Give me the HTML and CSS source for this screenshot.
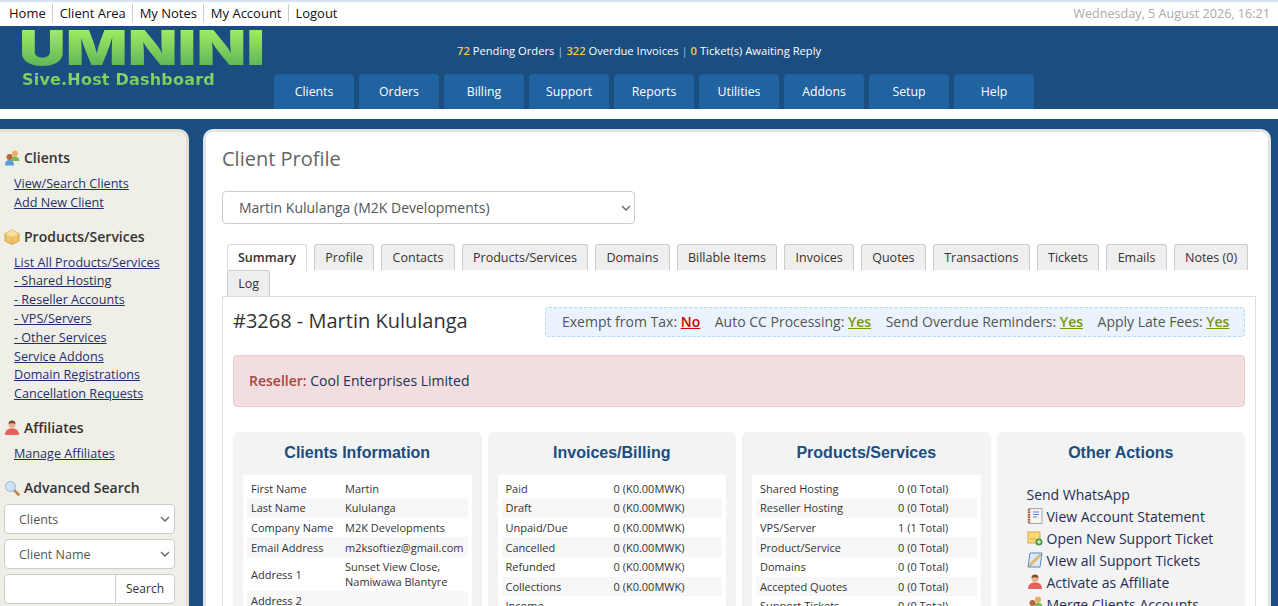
FILE: index.html
```html
<!DOCTYPE html>
<html lang="en">
  <head>
    <meta charset="UTF-8" />
    <title>Client Profile</title>
    <link rel="stylesheet" href="styles.css">
  </head>
  <body>
    <svg class="sprites" width="0" height="0">
      <symbol id="i-clients" viewBox="0 0 16 16">
        <circle cx="11" cy="3.500" r="3" fill="#e8b060"/>
        <path d="M7 11c0-3 2-4.500 4-4.500s4.500 1.500 4.500 4.500z" fill="#7fb85a"/>
        <circle cx="5.500" cy="7" r="3" fill="#b5683c"/>
        <path d="M1 15.500c0-4 2-5.500 4.500-5.500s4.500 1.500 4.500 5.500z" fill="#5a9ad8"/>
      </symbol>
      <symbol id="i-box" viewBox="0 0 16 16">
        <path d="M8 1l7 3.500v7.500l-7 3.500-7-3.500v-7.500z" fill="#f0c468" stroke="#c89a48" stroke-width=".8"/>
        <path d="M1 4.500l7 3.500 7-3.500-7-3.500z" fill="#f8e0a0"/>
        <path d="M8 8v7.500" stroke="#d8aa58"/>
      </symbol>
      <symbol id="i-person" viewBox="0 0 16 16">
        <circle cx="8" cy="4.500" r="3.500" fill="#e8b090"/>
        <path d="M4.500 4c0-2.500 1.500-3.500 3.500-3.500s3.500 1 3.500 3.500c-1.500-1-5.500-1-7 0z" fill="#7a4a28"/>
        <path d="M1 15c0-5 3-6.500 7-6.500s7 1.500 7 6.500z" fill="#e8605a"/>
      </symbol>
      <symbol id="i-search" viewBox="0 0 16 16">
        <path d="M10 10l4.500 4.500" stroke="#b88850" stroke-width="2.500" stroke-linecap="round"/>
        <circle cx="6.500" cy="6.500" r="5" fill="#cfe2f5" stroke="#9ab8d8"/>
      </symbol>
      <symbol id="i-statement" viewBox="0 0 16 16">
        <rect x="2" y=".5" width="13" height="15" fill="#f4f4f4" stroke="#a8a8a8"/>
        <path d="M2 1v14" stroke="#b0583c" stroke-width="2.500" stroke-dasharray="1.500 1"/>
        <path d="M6 4h6M6 6.500h6M6 9h4" stroke="#5a8ad0"/>
      </symbol>
      <symbol id="i-ticket" viewBox="0 0 16 16">
        <rect x="1" y="2" width="12" height="11" fill="#f8d878" stroke="#d8a848"/>
        <path d="M3 9h6" stroke="#d8a848"/>
        <circle cx="12" cy="12" r="3.500" fill="#4a9a4a"/>
        <path d="M10 12h4M12 10v4" stroke="#fff"/>
      </symbol>
      <symbol id="i-edit" viewBox="0 0 16 16">
        <path d="M3 1h12l-2 14h-12z" fill="#dce9f8" stroke="#5a8ac8"/>
        <path d="M14.500 3l-9 9-3 3 .8-3.800 9-8.500z" fill="#f0c860" stroke="#a88838" stroke-width=".6"/>
      </symbol>
    </svg>

    <div class="topbar">
      <nav class="top-links">
        <a href="#">Home</a>
        <a href="#">Client Area</a>
        <a href="#">My Notes</a>
        <a href="#">My Account</a>
        <a href="#">Logout</a>
      </nav>
      <div class="top-date">Wednesday, 5 August 2026, 16:21</div>
    </div>

    <header class="header">
      <div class="logo">
        <div class="logo-name">UMNINI</div>
        <div class="logo-sub">Sive.Host Dashboard</div>
      </div>
      <div class="header-main">
        <div class="stats">
          <b>72</b> Pending Orders <i>|</i> <b>322</b> Overdue Invoices <i>|</i> <b>0</b> Ticket(s) Awaiting Reply
        </div>
        <nav class="main-nav">
          <a href="#">Clients</a>
          <a href="#">Orders</a>
          <a href="#">Billing</a>
          <a href="#">Support</a>
          <a href="#">Reports</a>
          <a href="#">Utilities</a>
          <a href="#">Addons</a>
          <a href="#">Setup</a>
          <a href="#">Help</a>
        </nav>
      </div>
    </header>

    <div class="page">
      <aside class="sidebar">
        <h3><svg class="icon"><use href="#i-clients"/></svg>Clients</h3>
        <ul>
          <li><a href="#">View/Search Clients</a></li>
          <li><a href="#">Add New Client</a></li>
        </ul>
        <h3><svg class="icon"><use href="#i-box"/></svg>Products/Services</h3>
        <ul>
          <li><a href="#">List All Products/Services</a></li>
          <li><a href="#">- Shared Hosting</a></li>
          <li><a href="#">- Reseller Accounts</a></li>
          <li><a href="#">- VPS/Servers</a></li>
          <li><a href="#">- Other Services</a></li>
          <li><a href="#">Service Addons</a></li>
          <li><a href="#">Domain Registrations</a></li>
          <li><a href="#">Cancellation Requests</a></li>
        </ul>
        <h3><svg class="icon"><use href="#i-person"/></svg>Affiliates</h3>
        <ul>
          <li><a href="#">Manage Affiliates</a></li>
        </ul>
        <h3 class="search-title"><svg class="icon"><use href="#i-search"/></svg>Advanced Search</h3>
        <select class="side-select"><option>Clients</option></select>
        <select class="side-select"><option>Client Name</option></select>
        <div class="search-row">
          <input type="text" />
          <button>Search</button>
        </div>
      </aside>

      <main class="content">
        <h1>Client Profile</h1>
        <select class="client-select"><option>Martin Kululanga (M2K Developments)</option></select>

        <ul class="tabs">
          <li class="active">Summary</li>
          <li>Profile</li>
          <li>Contacts</li>
          <li>Products/Services</li>
          <li>Domains</li>
          <li>Billable Items</li>
          <li>Invoices</li>
          <li>Quotes</li>
          <li>Transactions</li>
          <li>Tickets</li>
          <li>Emails</li>
          <li>Notes (0)</li>
          <li>Log</li>
        </ul>

        <section class="tab-box">
          <div class="client-head">
            <h2>#3268 - Martin Kululanga</h2>
            <div class="flags">
              <span>Exempt from Tax: <a class="no" href="#">No</a></span>
              <span>Auto CC Processing: <a class="yes" href="#">Yes</a></span>
              <span>Send Overdue Reminders: <a class="yes" href="#">Yes</a></span>
              <span>Apply Late Fees: <a class="yes" href="#">Yes</a></span>
            </div>
          </div>

          <div class="alert"><strong>Reseller:</strong> Cool Enterprises Limited</div>

          <div class="columns">
            <div class="col">
              <h4>Clients Information</h4>
              <table class="info info-client">
                <tr><td>First Name</td><td>Martin</td></tr>
                <tr><td>Last Name</td><td>Kululanga</td></tr>
                <tr><td>Company Name</td><td>M2K Developments</td></tr>
                <tr><td>Email Address</td><td>m2ksoftiez@gmail.com</td></tr>
                <tr><td>Address 1</td><td>Sunset View Close,<br>Namiwawa Blantyre</td></tr>
                <tr><td>Address 2</td><td></td></tr>
              </table>
            </div>
            <div class="col">
              <h4>Invoices/Billing</h4>
              <table class="info info-billing">
                <tr><td>Paid</td><td>0 (K0.00MWK)</td></tr>
                <tr><td>Draft</td><td>0 (K0.00MWK)</td></tr>
                <tr><td>Unpaid/Due</td><td>0 (K0.00MWK)</td></tr>
                <tr><td>Cancelled</td><td>0 (K0.00MWK)</td></tr>
                <tr><td>Refunded</td><td>0 (K0.00MWK)</td></tr>
                <tr><td>Collections</td><td>0 (K0.00MWK)</td></tr>
                <tr><td>Income</td><td></td></tr>
              </table>
            </div>
            <div class="col">
              <h4>Products/Services</h4>
              <table class="info info-products">
                <tr><td>Shared Hosting</td><td>0 (0 Total)</td></tr>
                <tr><td>Reseller Hosting</td><td>0 (0 Total)</td></tr>
                <tr><td>VPS/Server</td><td>1 (1 Total)</td></tr>
                <tr><td>Product/Service</td><td>0 (0 Total)</td></tr>
                <tr><td>Domains</td><td>0 (0 Total)</td></tr>
                <tr><td>Accepted Quotes</td><td>0 (0 Total)</td></tr>
                <tr><td>Support Tickets</td><td>0 (0 Total)</td></tr>
              </table>
            </div>
            <div class="col">
              <h4>Other Actions</h4>
              <ul class="actions">
                <li>Send WhatsApp</li>
                <li><svg class="icon-sm"><use href="#i-statement"/></svg>View Account Statement</li>
                <li><svg class="icon-sm"><use href="#i-ticket"/></svg>Open New Support Ticket</li>
                <li><svg class="icon-sm"><use href="#i-edit"/></svg>View all Support Tickets</li>
                <li><svg class="icon-sm"><use href="#i-person"/></svg>Activate as Affiliate</li>
                <li><svg class="icon-sm"><use href="#i-clients"/></svg>Merge Clients Accounts</li>
              </ul>
            </div>
          </div>
        </section>
      </main>
    </div>
  </body>
</html>
```

FILE: styles.css
```css
:root {
  --blue: #1a4d80;
  --tab-blue: #2162a1;
  --text: #333;
  --link: #1f2f6b;
  --chevron: url("data:image/svg+xml,%3Csvg xmlns='http://www.w3.org/2000/svg' width='10' height='6'%3E%3Cpath d='M1 1l4 4 4-4' fill='none' stroke='%23666' stroke-width='1.400'/%3E%3C/svg%3E");
}

* {
  padding: 0;
  margin: 0;
  box-sizing: border-box;
}

html,
body {
  height: 606px;
  overflow: hidden;
}

body {
  font-family: "Open Sans", sans-serif;
  font-size: 13px;
  color: var(--text);
  background-color: #fff;
}

.sprites {
  position: absolute;
}

/* top bar */
.topbar {
  height: 26px;
  border-top: 2px solid #d9e4ee;
  display: flex;
  justify-content: space-between;
  align-items: center;
  padding: 0 8px 2px 9px;
}

.top-links a {
  color: #111;
  text-decoration: none;
  padding-right: 6px;
  margin-right: 3.500px;
  border-right: 1px solid #ccc;
}

.top-links a:last-child {
  border-right: 0;
}

.top-date {
  color: #aaa;
  font-size: 12.600px;
}

/* header */
.header {
  height: 83px;
  background-color: var(--blue);
  display: flex;
}

.logo {
  width: 274px;
  padding-left: 19px;
  flex-shrink: 0;
}

.logo-name {
  width: max-content;
  height: 43px;
  line-height: 43px;
  font-family: Inter, sans-serif;
  font-weight: 900;
  font-size: 48px;
  transform-origin: left;
  transform: scaleX(1.350);
  background: linear-gradient(#a0ea62 10%, #62b858 90%);
  -webkit-background-clip: text;
  background-clip: text;
  color: transparent;
}

.logo-sub {
  width: max-content;
  margin: 1px 0 0 3px;
  font-family: "DejaVu Sans", sans-serif;
  font-weight: 700;
  font-size: 16px;
  line-height: 20px;
  letter-spacing: 0.2px;
  background: linear-gradient(#94e060, #68c060);
  -webkit-background-clip: text;
  background-clip: text;
  color: transparent;
}

.header-main {
  flex: 1;
  display: flex;
  flex-direction: column;
  justify-content: space-between;
}

.stats {
  padding: 17px 0 0 183px;
  color: #fff;
  font-size: 11.200px;
}

.stats b {
  color: #f6c945;
  font-weight: 600;
}

.stats i {
  font-style: normal;
  color: #8fc4ee;
}

.main-nav {
  display: flex;
  gap: 5px;
}

.main-nav a {
  width: 80px;
  height: 35px;
  line-height: 35px;
  text-align: center;
  font-size: 12.300px;
  color: #fff;
  text-decoration: none;
  background-color: var(--tab-blue);
  border-radius: 4px 4px 0 0;
}

/* page */
.page {
  margin-top: 10px;
  padding: 10px 7px 0 0;
  height: 487px;
  background-color: var(--blue);
  display: flex;
  gap: 14px;
}

.sidebar {
  width: 189px;
  flex-shrink: 0;
  height: 600px;
  padding: 17px 14px 0 4px;
  background-color: #f0efe7;
  border-top: 3px solid #e2dfcf;
  border-right: 3px solid #e2dfcf;
  border-radius: 0 10px 0 0;
}

.sidebar h3 {
  display: flex;
  align-items: center;
  font-size: 14px;
  font-weight: 600;
  line-height: 18px;
  margin-bottom: 8px;
  color: #333;
}

.sidebar .search-title {
  margin-bottom: 7px;
}

.icon {
  width: 16px;
  height: 16px;
  margin: 0 4px 0 0;
}

.sidebar ul {
  list-style: none;
  padding-left: 10px;
  margin-bottom: 15px;
}

.sidebar li {
  line-height: 18.800px;
  font-size: 12.600px;
}

.sidebar li a {
  color: var(--link);
}

.side-select {
  display: block;
  width: 171px;
  height: 30px;
  margin-bottom: 5px;
  padding: 2px 0 0 14px;
  border: 1px solid #ccc;
  border-radius: 4px;
  appearance: none;
  background: #fff var(--chevron) no-repeat right 4px center;
  font-family: inherit;
  font-size: 12.500px;
  color: #555;
}

.search-row {
  display: flex;
  width: 171px;
  height: 30px;
  border: 1px solid #ccc;
  border-radius: 4px;
  background-color: #fff;
}

.search-row input {
  width: 111px;
  border: 0;
  border-right: 1px solid #ccc;
  background: transparent;
}

.search-row button {
  flex: 1;
  border: 0;
  background: transparent;
  font-family: inherit;
  font-size: 12px;
  color: #333;
}

/* content */
.content {
  flex: 1;
  height: 600px;
  padding: 13px 12px 0 16px;
  background-color: #fff;
  border: 3px solid #e1e5e9;
  border-bottom: 0;
  border-radius: 10px 10px 0 0;
}

.content h1 {
  font-size: 20px;
  font-weight: 400;
  line-height: 27px;
  color: #666;
  margin-bottom: 19px;
}

.client-select {
  display: block;
  width: 413px;
  height: 33px;
  padding-left: 16px;
  border: 1px solid #ccc;
  border-radius: 4px;
  appearance: none;
  background: #fff var(--chevron) no-repeat right 3px center;
  font-family: inherit;
  font-size: 14px;
  color: #555;
}

.tabs {
  list-style: none;
  display: flex;
  flex-wrap: wrap;
  column-gap: 7px;
  margin-top: 20px;
  padding-left: 5px;
}

.tabs li {
  height: 26px;
  line-height: 25px;
  padding: 0 10.300px;
  margin-bottom: -1px;
  font-size: 12.500px;
  background-color: #eee;
  border: 1px solid #ccc;
  border-bottom: 0;
  border-radius: 3px 3px 0 0;
  color: #333;
}

.tabs li.active {
  background-color: #fff;
  border-color: #ddd;
  font-weight: 600;
  height: 27px;
  padding: 0 10px;
}

.tab-box {
  position: relative;
  height: 400px;
  padding: 10px 10px 0;
  border: 1px solid #ddd;
  margin-top: 1px;
}

.client-head {
  display: flex;
  justify-content: space-between;
  align-items: center;
  height: 30px;
}

.client-head h2 {
  font-size: 20px;
  font-weight: 400;
  color: #333;
  padding-bottom: 3px;
}

.flags {
  display: flex;
  gap: 14.500px;
  align-items: center;
  width: 700px;
  height: 30px;
  padding: 0 0 2px 16px;
  font-size: 14px;
  color: #555;
  background-color: #eaf3fb;
  border: 1px dashed #bcd8f0;
  border-radius: 4px;
}

.flags a {
  font-weight: 600;
}

.flags .no {
  color: #c00;
}

.flags .yes {
  color: #7d9410;
}

.alert {
  height: 52px;
  line-height: 50px;
  margin-top: 18px;
  padding-left: 15px;
  font-size: 14px;
  color: #1f2f55;
  background-color: #f2dede;
  border: 1px solid #ebccd1;
  border-radius: 4px;
}

.alert strong {
  color: #a94442;
  font-weight: 600;
}

.columns {
  display: grid;
  grid-template-columns: repeat(4, 1fr);
  gap: 6px;
  margin-top: 25px;
}

.col {
  height: 300px;
  padding: 0 10px;
  background-color: #f3f3f3;
  border-radius: 6px;
}

.col h4 {
  font-family: "Liberation Sans", sans-serif;
  font-size: 16px;
  font-weight: 700;
  line-height: 20px;
  padding: 11px 0 12px;
  height: 43px;
  text-align: center;
  color: var(--blue);
}

.info {
  width: 100%;
  border-collapse: collapse;
  table-layout: fixed;
  background-color: #fff;
  border: 4px solid #fff;
  font-size: 11px;
  line-height: 15px;
}

.info td {
  padding: 2px 4px;
  height: 19.700px;
  vertical-align: middle;
}

.info tr:nth-child(even) {
  background-color: #f7f7f7;
}

.info-client td:first-child {
  width: 96px;
}

.info-billing td:first-child {
  width: 110px;
}

.info-products td:first-child {
  width: 140px;
}

.actions {
  list-style: none;
  padding: 8px 0 0 20px;
  font-size: 14px;
  color: #1f2f55;
}

.actions li {
  display: flex;
  align-items: center;
  height: 22px;
}

.icon-sm {
  width: 16px;
  height: 16px;
  margin-right: 4px;
  flex-shrink: 0;
}
```
